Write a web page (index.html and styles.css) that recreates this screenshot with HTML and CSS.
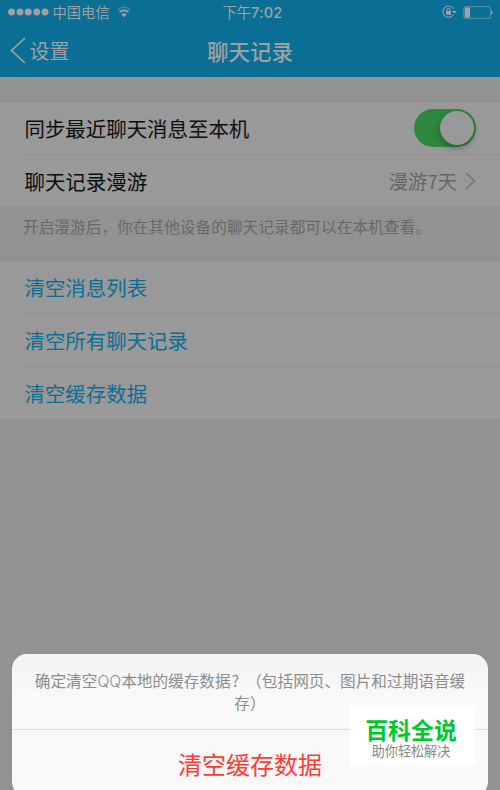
FILE: index.html
```
<!DOCTYPE html>
<html lang="zh-CN">
<head>
<meta charset="utf-8">
<title>聊天记录</title>
<link rel="stylesheet" href="styles.css">
</head>
<body>
<div class="screen">
  <header class="header">
    <div class="status">
      <div class="carrier">
        <svg class="signal" width="41" height="8" viewBox="0 0 41 8"><circle cx="3.6" cy="4" r="3.5"/><circle cx="12" cy="4" r="3.5"/><circle cx="20.3" cy="4" r="3.5"/><circle cx="28.7" cy="4" r="3.5"/><circle cx="37" cy="4" r="3.5"/></svg>
        <span>中国电信</span>
        <svg class="wifi" width="14" height="12" viewBox="0 0 14 12"><path class="faint" d="M.4 4Q7-1.8 13.6 4"/><path class="arc" d="M2.4 6.2Q7 2.4 11.6 6.2"/><path class="dot" d="M4.3 8.3Q7 6.2 9.7 8.3L7 11.2Z"/></svg>
      </div>
      <span class="time">下午<span class="digits">7:02</span></span>
      <div class="indicators">
        <svg width="15" height="14" viewBox="0 0 15 14"><path class="ring" d="M11.5 9.3A5.6 5.6 0 1 1 11.7 4.4"/><path class="tip" d="M10.1 6h4.4l-2.2 2.8z"/><rect class="tip" x="4" y="6" width="5" height="3.8" rx=".5"/><path class="ring" d="M5 6V4.8a1.5 1.5 0 0 1 3 0V6"/></svg>
        <svg width="30" height="13" viewBox="0 0 30 13"><rect class="shell" x=".7" y=".7" width="26.8" height="11.6" rx="2"/><rect class="tip" x="1.7" y="1.5" width="5.3" height="10"/><path class="tip" d="M28.2 4.4q1.4.5 1.4 2.1t-1.4 2.1z"/></svg>
      </div>
    </div>
    <nav class="nav">
      <div class="back">
        <svg width="16" height="27" viewBox="0 0 16 27"><path d="M15 1L1.5 13.5L15 26"/></svg>
        <span>设置</span>
      </div>
      <h1>聊天记录</h1>
    </nav>
  </header>
  <main>
    <section class="group">
      <div class="row"><span>同步最近聊天消息至本机</span><span class="switch"><span class="knob"></span></span></div>
      <div class="row"><span>聊天记录漫游</span><span class="value">漫游7天<svg width="11" height="18" viewBox="0 0 11 18"><path d="M1 1L9.5 9L1 17"/></svg></span></div>
    </section>
    <p class="note">开启漫游后，你在其他设备的聊天记录都可以在本机查看。</p>
    <section class="group links">
      <div class="row">清空消息列表</div>
      <div class="row">清空所有聊天记录</div>
      <div class="row">清空缓存数据</div>
    </section>
  </main>
  <div class="sheet">
    <div class="message"><span>确定清空<span class="latin">QQ</span>本地的缓存数据<span class="query">?</span>（包括网页、图片和过期语音缓</span><span>存）</span></div>
    <div class="action">清空缓存数据</div>
  </div>
  <div class="brand"><strong>百科全说</strong><span>助你轻松解决</span></div>
</div>
</body>
</html>
```
FILE: styles.css
```
* { box-sizing: border-box; }
body {
  margin: 0;
  font-family: "Noto Sans CJK SC", sans-serif;
}
svg { display: block; fill: none; }
.screen {
  position: relative;
  width: 500px;
  height: 790px;
  overflow: hidden;
  background: #929292;
}
.header {
  height: 77px;
  background: #0b6e94;
  color: #9da2a4;
}
.status {
  display: grid;
  grid-template-columns: 1fr auto 1fr;
  grid-template-rows: 24px;
  align-items: center;
  height: 25px;
  padding: 0 7px 0 8px;
  font-size: 14.3px;
  line-height: 24px;
}
.carrier, .indicators { display: flex; align-items: center; }
.carrier span { margin-left: 3.5px; }
.signal { fill: #a0a0a0; }
.wifi { margin-left: 7px; }
.arc { stroke: #a0a4a6; stroke-width: 1.6; }
.faint { stroke: #4f879b; stroke-width: 1.1; }
.wifi .dot, .tip { fill: #a0a4a6; }
.time { padding-left: 4px; }
.digits { font-family: "Inter", sans-serif; font-weight: 500; font-size: 14.6px; line-height: 1; letter-spacing: .2px; }
.indicators { justify-content: flex-end; gap: 6px; }
.ring { stroke: #86a0aa; stroke-width: 1.1; }
.shell { stroke: #4f8ba3; stroke-width: 1.2; }
.nav {
  display: grid;
  grid-template-columns: 1fr auto 1fr;
  grid-template-rows: 51px;
  align-items: center;
  height: 52px;
  padding: 0 10px;
}
.back { display: flex; align-items: center; gap: 3.5px; font-size: 20px; }
.back svg { stroke: #9da2a4; stroke-width: 1.7; }
h1 { margin: 0; font-size: 21.5px; font-weight: 500; line-height: 50px; }
main { padding-top: 24px; }
.group {
  background: #999;
  border-top: 1px solid #8f8f8f;
  padding-left: 24.5px;
}
.row {
  display: flex;
  align-items: center;
  justify-content: space-between;
  height: 53px;
  padding-right: 24px;
  font-size: 20.45px;
  line-height: 52px;
  color: #0d0d0d;
  border-bottom: 1px solid #909090;
}
.row:last-child { height: 52px; border-bottom: 0; }
.links .row { color: #0b6e94; }
.value { display: flex; align-items: center; gap: 8px; color: #656565; font-size: 19.2px; }
.value svg { stroke: #7b7b7b; stroke-width: 1.8; }
.switch {
  width: 62px;
  height: 38px;
  padding: 2px;
  border-radius: 19px;
  background: #2d873d;
  display: flex;
  justify-content: flex-end;
}
.knob {
  width: 34px;
  height: 34px;
  border-radius: 50%;
  background: #999;
  box-shadow: 0 3px 6px rgba(0,0,0,.3);
}
.note {
  margin: 0;
  height: 53px;
  padding-left: 23px;
  font-size: 15.7px;
  line-height: 39px;
  color: #686868;
  white-space: nowrap;
}
.sheet {
  position: absolute;
  left: 12px;
  top: 654px;
  width: 476px;
  height: 143px;
  border-radius: 15px;
  background: linear-gradient(#f4f4f4, #f9f9f9 45px);
  text-align: center;
}
.message {
  display: flex;
  flex-direction: column;
  height: 76px;
  padding-top: 16px;
  border-bottom: 1px solid #dedede;
  color: #8c8c8c;
  font-size: 15.65px;
  line-height: 21.5px;
  white-space: nowrap;
}
.latin { font-family: "Inter", sans-serif; font-weight: 300; line-height: 1; }
.query { display: inline-block; width: 15.6px; height: 21px; text-align: left; padding-left: 1px; }
.action { color: #ff3b34; font-size: 24px; line-height: 68px; }
.brand {
  position: absolute;
  left: 350px;
  top: 705px;
  width: 125px;
  height: 60px;
  padding-top: 10px;
  display: flex;
  flex-direction: column;
  align-items: center;
  background: #fff;
}
.brand strong { font-size: 22.9px; line-height: 28px; color: #00c72e; font-weight: 700; padding-right: 3px; }
.brand span { font-size: 13.1px; line-height: 16px; color: #858585; padding-right: 3px; }
```
